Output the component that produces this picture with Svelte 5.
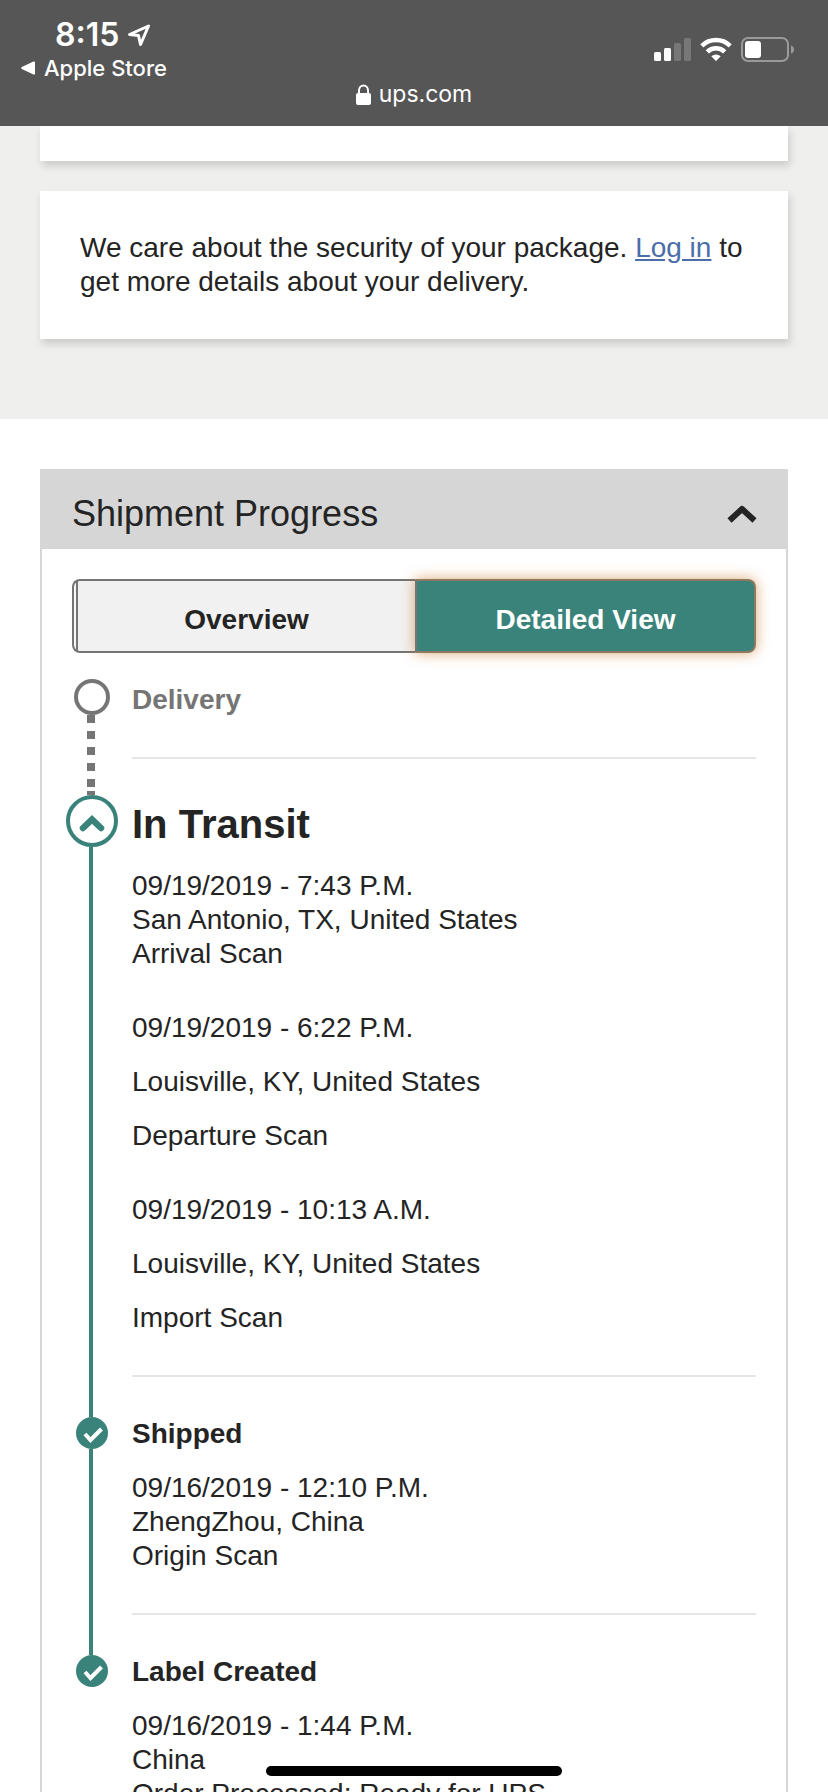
<script>
	//? variables
	let view = "detailed";
	let open = true;

	const steps = [
		{ title: "Delivery", state: "pending", scans: [] },
		{
			title: "In Transit",
			state: "current",
			scans: [
				["09/19/2019 - 7:43 P.M.", "San Antonio, TX, United States", "Arrival Scan"],
				["09/19/2019 - 6:22 P.M.", "Louisville, KY, United States", "Departure Scan"],
				["09/19/2019 - 10:13 A.M.", "Louisville, KY, United States", "Import Scan"],
			],
		},
		{
			title: "Shipped",
			state: "done",
			scans: [["09/16/2019 - 12:10 P.M.", "ZhengZhou, China", "Origin Scan"]],
		},
		{
			title: "Label Created",
			state: "done",
			scans: [["09/16/2019 - 1:44 P.M.", "China", "Order Processed: Ready for UPS"]],
		},
	];

	//? Logic
	function toggle() {
		open = !open;
	}
</script>

<style>
	:global(body) {
		margin: 0;
	}

	.screen {
		display: flex;
		flex-direction: column;
		height: 100vh;
		overflow: hidden;
		background-color: #fff;
		color: #242424;
		font-family: "Liberation Sans", Arial, sans-serif;
		font-size: 28px;
		line-height: 34px;
	}

	button {
		font: inherit;
		color: inherit;
		cursor: pointer;
	}

	/* browser bar */
	.bar {
		display: grid;
		grid-template-columns: 1fr auto 1fr;
		flex: none;
		height: 126px;
		background-color: #565656;
		color: #fff;
		font-family: Inter, sans-serif;
		font-size: 22px;
		line-height: 28px;
	}
	.bar-left {
		padding: 16px 0 0 21px;
	}
	.clock {
		display: flex;
		align-items: center;
		gap: 8px;
		height: 38px;
		padding-left: 34px;
		font-size: 32px;
		font-weight: 600;
	}
	.back {
		display: flex;
		align-items: center;
		gap: 9px;
		color: #fff;
		font-weight: 500;
		text-decoration: none;
	}
	.address {
		display: flex;
		align-items: center;
		align-self: end;
		gap: 8px;
		padding-bottom: 18px;
		font-size: 23px;
	}
	.bar-right {
		display: flex;
		justify-content: flex-end;
		align-items: flex-start;
		gap: 9px;
		padding: 37px 34px 0 0;
	}

	.page {
		flex: 1;
		min-height: 0;
		overflow-y: auto;
		scrollbar-width: none;
	}

	/* cards */
	.cards {
		display: flex;
		flex-direction: column;
		gap: 30px;
		padding: 0 40px 80px;
		background-color: #efefee;
	}
	.card {
		padding: 40px;
		background-color: #fff;
		box-shadow: 2px 5px 8px rgba(0, 0, 0, 0.15);
	}
	.card.scrolled {
		padding: 0;
		height: 35px;
	}
	.card p {
		margin: 0;
	}
	.card a {
		color: #4b6ea9;
	}

	/* shipment panel */
	.panel {
		margin: 50px 40px;
		border: 2px solid #d6d6d6;
	}
	.panel h2 {
		margin: 0;
		font-weight: normal;
	}
	.panel-head {
		display: flex;
		justify-content: space-between;
		align-items: center;
		width: 100%;
		height: 78px;
		padding: 8px 29px 0 30px;
		border: 0;
		background-color: #d6d6d6;
		font-size: 36px;
	}
	.panel-body {
		padding: 30px;
	}

	.tabs {
		display: flex;
		height: 74px;
		margin-bottom: 26px;
	}
	.tabs button {
		flex: 1;
		padding: 8px 0 0;
		border: 2px solid #757575;
		background-color: #f1f1f1;
		font-weight: bold;
	}
	.tabs button:first-child {
		padding-left: 4px;
		border-right: 0;
		border-radius: 8px 0 0 8px;
		background-image: linear-gradient(to right, #f8f8f8 2px, #757575 2px 4px, transparent 4px);
	}
	.tabs button:last-child {
		border-radius: 0 8px 8px 0;
	}
	.tabs button.active {
		border-color: #8f7a5f;
		border-left-color: #757575;
		background-color: #3a837b;
		box-shadow: 0 0 14px rgba(200, 115, 30, 0.6);
		color: #fff;
	}

	/* timeline */
	.timeline {
		list-style: none;
		margin: 0 0 0 -6px;
		padding: 0;
	}
	.step {
		display: flex;
		gap: 14px;
	}
	.rail {
		display: flex;
		flex-direction: column;
		align-items: center;
		flex: none;
		width: 52px;
	}
	.line {
		flex: none;
		width: 4px;
		height: 40px;
		margin-right: 2px;
		background-color: #3a837b;
	}
	.line.below {
		flex: 1;
		height: auto;
	}
	.current .line.above {
		box-sizing: border-box;
		width: 8px;
		height: 36px;
		border-bottom: 4px solid #757575;
		background: repeating-linear-gradient(#fff 0 4px, #757575 4px 12px, #fff 12px 16px);
	}
	.pending .line.above,
	.step:last-child .line.below {
		display: none;
	}
	.pending .line.below {
		width: 8px;
		background: repeating-linear-gradient(#757575 0 8px, #fff 8px 16px);
	}
	.marker {
		box-sizing: border-box;
		display: flex;
		justify-content: center;
		align-items: center;
		flex: none;
		width: 32px;
		height: 32px;
		padding: 0;
		border: 0;
		border-radius: 50%;
		background-color: #3a837b;
	}
	.pending .marker {
		width: 36px;
		height: 36px;
		border: 4px solid #757575;
		background-color: #fff;
	}
	.current .marker {
		width: 52px;
		height: 52px;
		padding-top: 4px;
		border: 4px solid #3a837b;
		background-color: #fff;
	}

	.content {
		flex: 1;
		padding: 40px 0;
		border-bottom: 2px solid #e6e6e6;
	}
	.content h3 {
		margin: 0;
		font-size: 28px;
	}
	.pending .content {
		padding-top: 4px;
		color: #757575;
	}
	.current h3 {
		font-size: 40px;
		line-height: 50px;
	}
	.scan {
		display: flex;
		flex-direction: column;
		margin-top: 20px;
	}
	.scan + .scan {
		gap: 20px;
		margin-top: 40px;
	}

	.home-indicator {
		position: fixed;
		bottom: 16px;
		left: 50%;
		width: 296px;
		height: 10px;
		margin-left: -148px;
		border-radius: 5px;
		background-color: #000;
	}
</style>

<div class="screen">
	<header class="bar">
		<div class="bar-left">
			<div class="clock">
				<span>8:15</span>
				<svg width="24" height="24" viewBox="0 0 24 24" fill="none" stroke="#fff" stroke-width="3" stroke-linejoin="round">
					<path d="M21.500 3L2.500 11.500L11.500 12.500L13.500 21.500Z" />
				</svg>
			</div>
			<a class="back" href="#store">
				<svg width="14" height="14" viewBox="0 0 14 14" fill="#fff">
					<path d="M12.500 .5Q14 0 14 1.500V12.500Q14 14 12.500 13.500L.8 8Q-.5 7 .8 6Z" />
				</svg>
				Apple Store
			</a>
		</div>
		<div class="address">
			<svg width="15" height="21" viewBox="0 0 15 21">
				<path d="M3 11V6.500A4.500 5 0 0 1 12 6.500V11" fill="none" stroke="#fff" stroke-width="2" />
				<rect y="9" width="15" height="12" rx="2" fill="#fff" />
			</svg>
			<span>ups.com</span>
		</div>
		<div class="bar-right">
			<svg width="37" height="25" viewBox="0 0 37 25" fill="#fff">
				<rect x="0" y="15" width="7" height="9" rx="1.500" />
				<rect x="10" y="11" width="7" height="13" rx="1.500" />
				<rect x="20" y="6" width="7" height="18" rx="1.500" opacity=".2" />
				<rect x="30" y="1" width="7" height="23" rx="1.500" opacity=".2" />
			</svg>
			<svg width="32" height="25" viewBox="0 0 32 25">
				<g fill="none" stroke="#fff" stroke-width="4.500">
					<path d="M1.800 8.800A20.300 20.300 0 0 1 30.200 8.800" />
					<path d="M7.300 14.800A12.600 12.600 0 0 1 24.700 14.800" />
				</g>
				<path d="M11.300 19.300Q16 15.500 20.700 19.300L16.600 23.600Q16 24.200 15.400 23.600Z" fill="#fff" />
			</svg>
			<svg width="53" height="25" viewBox="0 0 53 25">
				<rect x="1" y="1" width="46" height="23" rx="6" fill="none" stroke="#9a9a9a" stroke-width="2" />
				<rect x="4" y="4" width="16" height="17" rx="3" fill="#fff" />
				<path d="M50 8.500Q53 9.500 53 12.500T50 16.500Z" fill="#9a9a9a" />
			</svg>
		</div>
	</header>

	<main class="page">
		<section class="cards">
			<div class="card scrolled"></div>
			<div class="card">
				<p>
					We care about the security of your package. <a href="#login">Log in</a> to get more details about your delivery.
				</p>
			</div>
		</section>

		<section class="panel">
			<h2>
				<button class="panel-head" aria-expanded={open} on:click={toggle}>
					Shipment Progress
					<svg width="30" height="18" viewBox="0 0 30 18" fill="none" stroke="#242424" stroke-width="6" stroke-linejoin="round">
						<path d="M2.500 15.500L15 4L27.500 15.500" />
					</svg>
				</button>
			</h2>
			{#if open}
				<div class="panel-body">
					<div class="tabs">
						<button class:active={view === "overview"} on:click={() => (view = "overview")}>Overview</button>
						<button class:active={view === "detailed"} on:click={() => (view = "detailed")}>Detailed View</button>
					</div>
					<ul class="timeline">
						{#each steps as step}
							<li class="step {step.state}">
								<div class="rail">
									<span class="line above"></span>
									{#if step.state === "current"}
										<button class="marker" aria-label="Hide scans">
											<svg width="26" height="18" viewBox="0 0 26 18" fill="none" stroke="#3a837b" stroke-width="6.500" stroke-linecap="round">
												<path d="M4 14L13 5.500L22 14" stroke-linejoin="miter" />
											</svg>
										</button>
									{:else}
										<span class="marker">
											{#if step.state === "done"}
												<svg width="32" height="32" viewBox="0 0 32 32" fill="none" stroke="#fff" stroke-width="4">
													<path d="M9 17L14.500 23L25.500 12" />
												</svg>
											{/if}
										</span>
									{/if}
									<span class="line below"></span>
								</div>
								<div class="content">
									<h3>{step.title}</h3>
									{#each step.scans as scan}
										<div class="scan">
											{#each scan as text}
												<span>{text}</span>
											{/each}
										</div>
									{/each}
								</div>
							</li>
						{/each}
					</ul>
				</div>
			{/if}
		</section>
	</main>

	<div class="home-indicator"></div>
</div>
